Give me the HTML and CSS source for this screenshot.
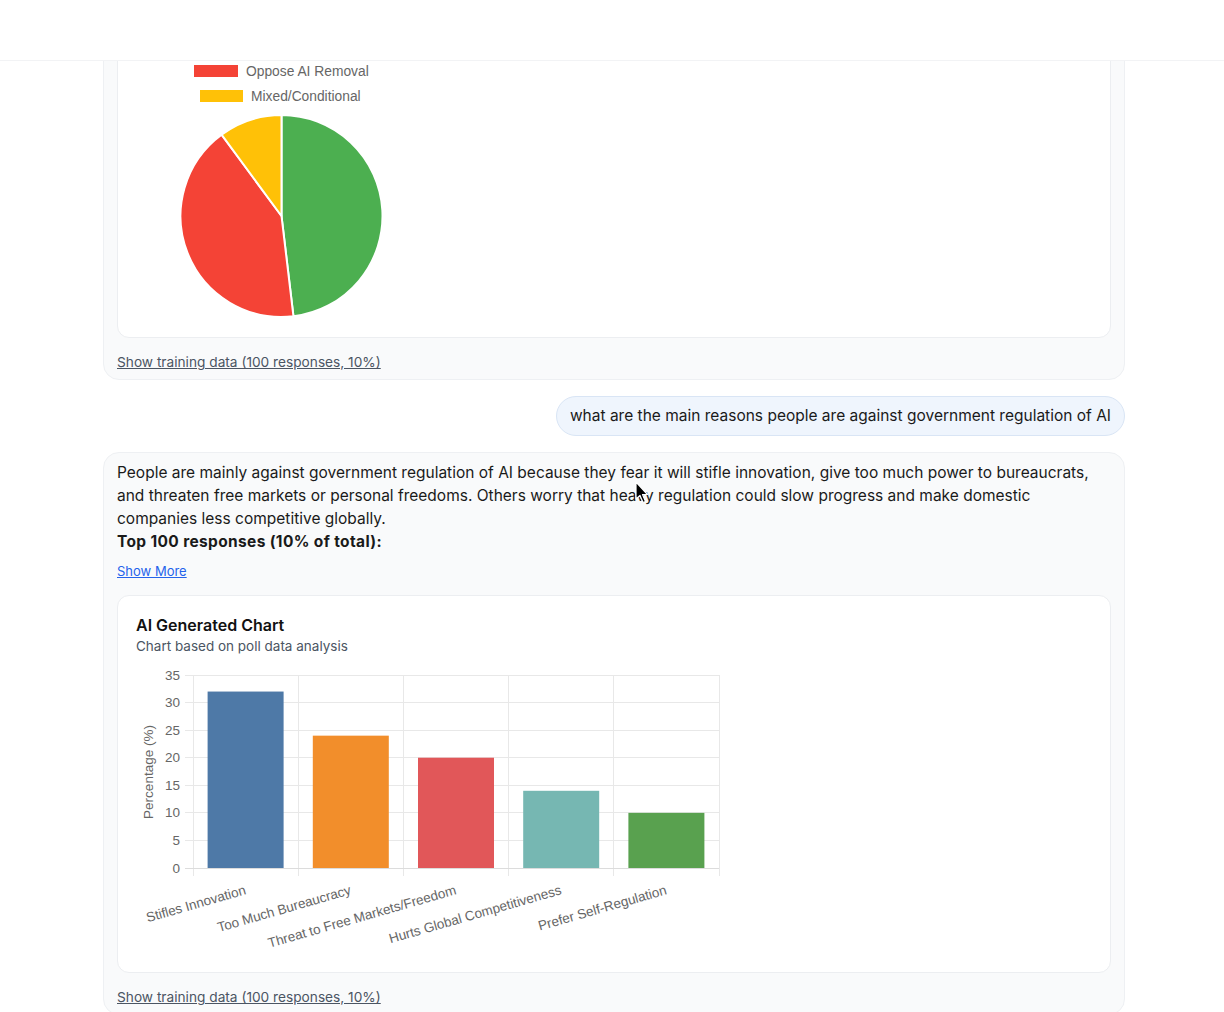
FILE: index.html
```html
<!DOCTYPE html>
<html lang="en">
<head>
<meta charset="utf-8">
<title>Poll Chat</title>
<link rel="stylesheet" href="styles.css">
</head>
<body>
<header class="topbar"></header>
<main class="chat">
  <article class="msg">
    <p class="msg-text">Opinions on removing AI are divided.</p>
    <p class="msg-strong">Top 100 responses (10% of total):</p>
    <a class="show-more" href="#">Show More</a>
    <section class="chart-card">
      <h3 class="chart-title">AI Generated Chart</h3>
      <p class="chart-sub">Chart based on poll data analysis</p>
      <svg class="chart" width="290" height="290" viewBox="0 0 290 290">
        <rect class="lg-green" x="52" y="11" width="44" height="12"/>
        <text class="lg-text" x="104" y="21.5">Support AI Removal</text>
        <rect class="lg-red" x="58" y="36" width="44" height="12"/>
        <text class="lg-text" x="110" y="46.5">Oppose AI Removal</text>
        <rect class="lg-yellow" x="64" y="61" width="43" height="12"/>
        <text class="lg-text" x="115" y="71.5">Mixed/Conditional</text>
        <path class="slice-green" d="M145.5,187 L145.5,86 A101,101 0 0 1 157.46,287.29 Z"/>
        <path class="slice-red" d="M145.5,187 L157.46,287.29 A101,101 0 0 1 85.57,105.71 Z"/>
        <path class="slice-yellow" d="M145.5,187 L85.57,105.71 A101,101 0 0 1 145.5,86 Z"/>
      </svg>
    </section>
    <a class="training-link" href="#">Show training data (100 responses, 10%)</a>
  </article>

  <div class="user-row">
    <div class="msg-user">what are the main reasons people are against government regulation of AI</div>
  </div>

  <article class="msg">
    <p class="msg-text">People are mainly against government regulation of AI because they fear it will stifle innovation, give too much power to bureaucrats, and threaten free markets or personal freedoms. Others worry that heavy regulation could slow progress and make domestic companies less competitive globally.</p>
    <p class="msg-strong">Top 100 responses (10% of total):</p>
    <a class="show-more" href="#">Show More</a>
    <section class="chart-card">
      <h3 class="chart-title">AI Generated Chart</h3>
      <p class="chart-sub">Chart based on poll data analysis</p>
      <svg class="chart" width="600" height="290" viewBox="0 0 600 290">
        <g class="grid">
          <line x1="49" y1="11.5" x2="583" y2="11.5"/>
          <line x1="49" y1="38.5" x2="583" y2="38.5"/>
          <line x1="49" y1="66.5" x2="583" y2="66.5"/>
          <line x1="49" y1="93.5" x2="583" y2="93.5"/>
          <line x1="49" y1="121.5" x2="583" y2="121.5"/>
          <line x1="49" y1="148.5" x2="583" y2="148.5"/>
          <line x1="49" y1="176.5" x2="583" y2="176.5"/>
          <line x1="57.5" y1="11" x2="57.5" y2="212"/>
          <line x1="162.5" y1="11" x2="162.5" y2="212"/>
          <line x1="267.5" y1="11" x2="267.5" y2="212"/>
          <line x1="372.5" y1="11" x2="372.5" y2="212"/>
          <line x1="477.5" y1="11" x2="477.5" y2="212"/>
          <line x1="583.5" y1="11" x2="583.5" y2="212"/>
        </g>
        <rect class="bar-blue" x="71.6" y="27.55" width="76" height="176.45"/>
        <rect class="bar-orange" x="176.8" y="71.66" width="76" height="132.34"/>
        <rect class="bar-red" x="282" y="93.72" width="76" height="110.28"/>
        <rect class="bar-teal" x="387.2" y="126.8" width="76" height="77.2"/>
        <rect class="bar-green" x="492.4" y="148.86" width="76" height="55.14"/>
        <line class="axis" x1="49" y1="204.5" x2="583" y2="204.5"/>
        <g class="tick-y">
          <text x="44" y="15.5">35</text>
          <text x="44" y="43">30</text>
          <text x="44" y="70.6">25</text>
          <text x="44" y="98.2">20</text>
          <text x="44" y="125.8">15</text>
          <text x="44" y="153.4">10</text>
          <text x="44" y="180.9">5</text>
          <text x="44" y="208.5">0</text>
        </g>
        <text class="axis-title" transform="translate(13,108) rotate(-90)">Percentage (%)</text>
        <g class="tick-x">
          <text x="110.6" y="230" transform="rotate(-16 110.6 230)">Stifles Innovation</text>
          <text x="215.8" y="230" transform="rotate(-16 215.8 230)">Too Much Bureaucracy</text>
          <text x="321" y="230" transform="rotate(-16 321 230)">Threat to Free Markets/Freedom</text>
          <text x="426.2" y="230" transform="rotate(-16 426.2 230)">Hurts Global Competitiveness</text>
          <text x="531.4" y="230" transform="rotate(-16 531.4 230)">Prefer Self-Regulation</text>
        </g>
      </svg>
    </section>
    <a class="training-link" href="#">Show training data (100 responses, 10%)</a>
  </article>
</main>
<svg class="cursor" width="16" height="24" viewBox="0 0 16 24">
  <path d="M1,1 L1,18 L5,14.5 L8,21.5 L10.5,20.5 L7.5,13.5 L12.5,13.5 Z"/>
</svg>
</body>
</html>
```

FILE: styles.css
```css
* { box-sizing: border-box; }

html, body {
  margin: 0;
  background: #ffffff;
}

body {
  font-family: Inter, "Noto Sans", sans-serif;
  color: #1a1a1a;
  overflow: hidden;
  height: 1012px;
}

.topbar {
  position: fixed;
  top: 0;
  left: 0;
  right: 0;
  height: 61px;
  background: #ffffff;
  border-bottom: 1px solid #f2f3f5;
  z-index: 10;
}

.chat {
  margin-top: -137px;
  padding: 0 99px 0 103px;
}

.msg {
  background: #f9fafb;
  border: 1px solid #eef0f3;
  border-radius: 16px;
  padding: 8px 13px 7px;
}

.msg-text,
.msg-strong {
  margin: 0;
  font-size: 15.5px;
  line-height: 23px;
  color: #1a1a1a;
}

.msg-strong {
  font-weight: 700;
  letter-spacing: 0.35px;
}

.show-more {
  display: block;
  width: max-content;
  margin-top: 8px;
  font-size: 13px;
  line-height: 20px;
  color: #2563eb;
  text-decoration: underline;
}

.chart-card {
  margin-top: 14px;
  background: #ffffff;
  border: 1px solid #eceef1;
  border-radius: 12px;
  padding: 18px;
}

.chart-title {
  margin: 0;
  font-size: 16px;
  line-height: 22px;
  font-weight: 600;
  color: #111111;
}

.chart-sub {
  margin: 0;
  font-size: 13.5px;
  line-height: 20px;
  color: #4b5563;
}

.chart {
  display: block;
  margin-top: 8px;
  font-family: "Liberation Sans", Arial, sans-serif;
}

.training-link {
  display: block;
  width: max-content;
  margin-top: 14px;
  font-size: 13.7px;
  line-height: 20px;
  color: #4b5563;
  text-decoration: underline;
}

.user-row {
  display: flex;
  justify-content: flex-end;
  margin: 16px 0;
}

.msg-user {
  background: #eff5fd;
  border: 1px solid #d9e5f5;
  border-radius: 20px;
  padding: 8px 13px;
  font-size: 15.5px;
  line-height: 22px;
  color: #1a1a1a;
}

/* pie chart */
.lg-text {
  font-size: 13.8px;
  fill: #666666;
}
.lg-green { fill: #4caf50; }
.lg-red { fill: #f44336; }
.lg-yellow { fill: #ffc107; }

.slice-green,
.slice-red,
.slice-yellow {
  stroke: #ffffff;
  stroke-width: 2;
  stroke-linejoin: round;
}
.slice-green { fill: #4caf50; }
.slice-red { fill: #f44336; }
.slice-yellow { fill: #ffc107; }

/* bar chart */
.grid line {
  stroke: #e8e8e8;
  stroke-width: 1;
}
.axis {
  stroke: #dcdcdc;
  stroke-width: 1;
}
.bar-blue { fill: #4e79a7; }
.bar-orange { fill: #f28e2b; }
.bar-red { fill: #e15759; }
.bar-teal { fill: #76b7b2; }
.bar-green { fill: #59a14f; }

.tick-y text,
.tick-x text {
  font-size: 13.5px;
  fill: #666666;
  text-anchor: end;
}
.axis-title {
  font-size: 13.5px;
  fill: #666666;
  text-anchor: middle;
  dominant-baseline: middle;
}

.cursor {
  position: fixed;
  left: 635px;
  top: 481px;
  z-index: 20;
}
.cursor path {
  fill: #000000;
  stroke: #ffffff;
  stroke-width: 1.2;
  stroke-linejoin: round;
}
```
